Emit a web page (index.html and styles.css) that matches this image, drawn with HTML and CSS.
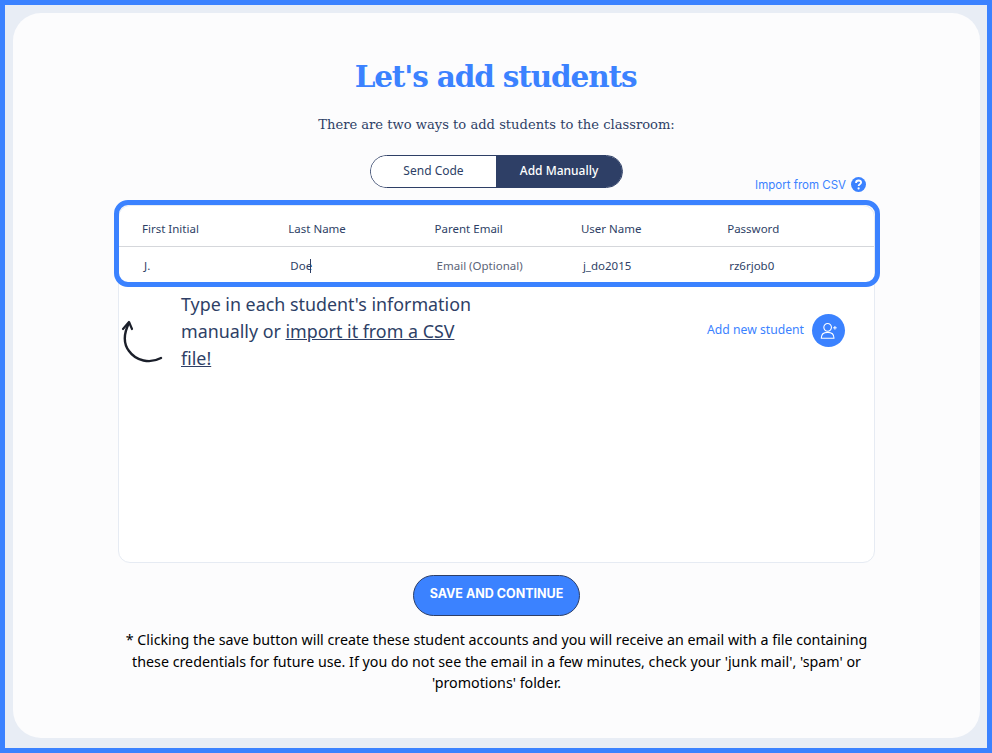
FILE: index.html
```html
<!DOCTYPE html>
<html lang="en">
<head>
<meta charset="utf-8">
<title>Let's add students</title>
<link rel="stylesheet" href="styles.css">
</head>
<body>
<main class="card">
  <h1 class="title">Let's add students</h1>
  <p class="subtitle">There are two ways to add students to the classroom:</p>
  <div class="toggle">
    <button class="toggle-btn">Send Code</button>
    <button class="toggle-btn active">Add Manually</button>
  </div>
  <div class="import-row">
    <a class="import-link">Import from CSV</a>
    <svg class="help" viewBox="0 0 15 15" width="15" height="15"><circle cx="7.5" cy="7.5" r="7.5" fill="#3b82ff"/><path d="M5 5.9c0-1.5 1.1-2.4 2.6-2.4s2.5.9 2.5 2.1c0 1.8-2.5 1.7-2.5 3.4" fill="none" stroke="#fff" stroke-width="1.8"/><circle cx="7.6" cy="11.4" r="1.1" fill="#fff"/></svg>
  </div>
  <section class="panel">
    <div class="highlight"></div>
    <div class="grid head">
      <span>First Initial</span><span>Last Name</span><span>Parent Email</span><span>User Name</span><span>Password</span>
    </div>
    <div class="grid row">
      <span>J.</span><span class="caret">Doe</span><span class="muted">Email (Optional)</span><span>j_do2015</span><span>rz6rjob0</span>
    </div>
    <div class="panel-body">
      <svg class="arrow" viewBox="0 0 44 48" width="44" height="48"><path d="M9 3C4 13 3 23 9 31C16 41 30 44 41 38" fill="none" stroke="#1b1f2a" stroke-width="2.4" stroke-linecap="round"/><path d="M3 9L9 2L12 9" fill="none" stroke="#1b1f2a" stroke-width="2.2" stroke-linecap="round" stroke-linejoin="round"/></svg>
      <p class="hint">Type in each student's information manually or <u>import it from a CSV file!</u></p>
      <div class="add">
        <span class="add-label">Add new student</span>
        <span class="add-icon"><svg viewBox="0 0 22 22" width="20" height="20"><circle cx="9.5" cy="7" r="4.2" fill="none" stroke="#fff" stroke-width="1.2"/><path d="M2.5 19c0-4.5 3-6.5 7-6.5s7 2 7 6.5z" fill="none" stroke="#fff" stroke-width="1.2" stroke-linejoin="round"/><path d="M17.5 5.5v4M15.5 7.5h4" stroke="#fff" stroke-width="1.1"/></svg></span>
      </div>
    </div>
  </section>
  <button class="save">SAVE AND CONTINUE</button>
  <p class="note">* Clicking the save button will create these student accounts and you will receive an email with a file containing these credentials for future use. If you do not see the email in a few minutes, check your 'junk mail', 'spam' or 'promotions' folder.</p>
</main>
</body>
</html>
```
FILE: styles.css
```css
* { box-sizing: border-box; }
html, body { height: 100%; }
body {
  margin: 0;
  padding: 8px 7px 10px 8px;
  border: 5px solid #3b82ff;
  background: #e8edf5;
  font-family: "Noto Sans", sans-serif;
  color: #2e3f66;
}
.card {
  height: 100%;
  background: #fcfcfd;
  border-radius: 28px;
  padding: 43px 105px 0;
  display: flex;
  flex-direction: column;
  align-items: center;
}
.title {
  margin: 0;
  padding-right: 2px;
  font-family: "DejaVu Serif", serif;
  font-weight: 700;
  font-size: 29.5px;
  letter-spacing: -1.15px;
  line-height: 42px;
  color: #3b82ff;
}
.subtitle {
  margin: 16px 0 0;
  font-family: "DejaVu Serif", serif;
  font-size: 13.1px;
  line-height: 22px;
}
.toggle {
  margin-top: 19px;
  display: flex;
  width: 253px;
  height: 33px;
  border: 1px solid #2e3f66;
  border-radius: 17px;
  overflow: hidden;
}
.toggle-btn {
  flex: 1 1 0;
  border: 0;
  padding: 0 0 2px;
  background: #fff;
  color: #2e3f66;
  font: 12px "Noto Sans", sans-serif;
}
.toggle-btn:first-child { flex: 0 0 125px; }
.toggle-btn.active { background: #2e3f66; color: #fff; font-weight: 500; }
.import-row {
  align-self: flex-end;
  display: flex;
  align-items: center;
  gap: 5px;
  height: 15px;
  margin: -11px 9px 0 0;
}
.import-link { font: 11.5px "Inter", sans-serif; color: #3b82ff; }
.panel {
  position: relative;
  width: 757px;
  height: 358px;
  margin-top: 13px;
  background: #fff;
  border: 1px solid #e6ebf3;
  border-radius: 12px;
}
.highlight {
  position: absolute;
  left: -5px;
  right: -6px;
  top: -6px;
  height: 87px;
  border: 5px solid #3b82ff;
  border-radius: 14px;
  pointer-events: none;
}
.grid {
  display: grid;
  grid-template-columns: repeat(5, 146.3px);
  padding-left: 23px;
  font-size: 11.5px;
  line-height: 16px;
}
.head { height: 41px; padding-top: 15px; border-bottom: 1px solid #d5d7db; }
.row { height: 38px; padding-top: 11px; }
.row span { padding-left: 2px; }
.muted { color: #5b6478; }
.caret { position: relative; }
.caret::after {
  content: "";
  position: absolute;
  left: 22px;
  top: 1px;
  width: 1px;
  height: 14px;
  background: #2e3f66;
}
.panel-body {
  display: flex;
  align-items: flex-start;
  padding: 6px 29px 0 1px;
}
.arrow { margin: 29px 17px 0 0; flex: none; }
.hint {
  margin: 0;
  width: 300px;
  font-size: 17.85px;
  line-height: 27px;
}
.add {
  margin-left: auto;
  margin-top: 23px;
  display: flex;
  align-items: center;
  gap: 8px;
  font-size: 12.2px;
  color: #3b82ff;
}
.add-label { margin-bottom: 2px; }
.add-icon {
  width: 33px;
  height: 33px;
  border-radius: 50%;
  background: #3b82ff;
  display: flex;
  align-items: center;
  justify-content: center;
}
.save {
  margin-top: 12px;
  width: 167px;
  height: 41px;
  padding: 0 0 4px;
  border: 1px solid #2e3f66;
  border-radius: 21px;
  background: #3b82ff;
  color: #fff;
  font: 700 12.5px "Inter", sans-serif;
}
.note {
  margin: 13px 0 0;
  width: 757px;
  text-align: center;
  font-size: 14.25px;
  line-height: 21.5px;
  color: #000;
}
```
